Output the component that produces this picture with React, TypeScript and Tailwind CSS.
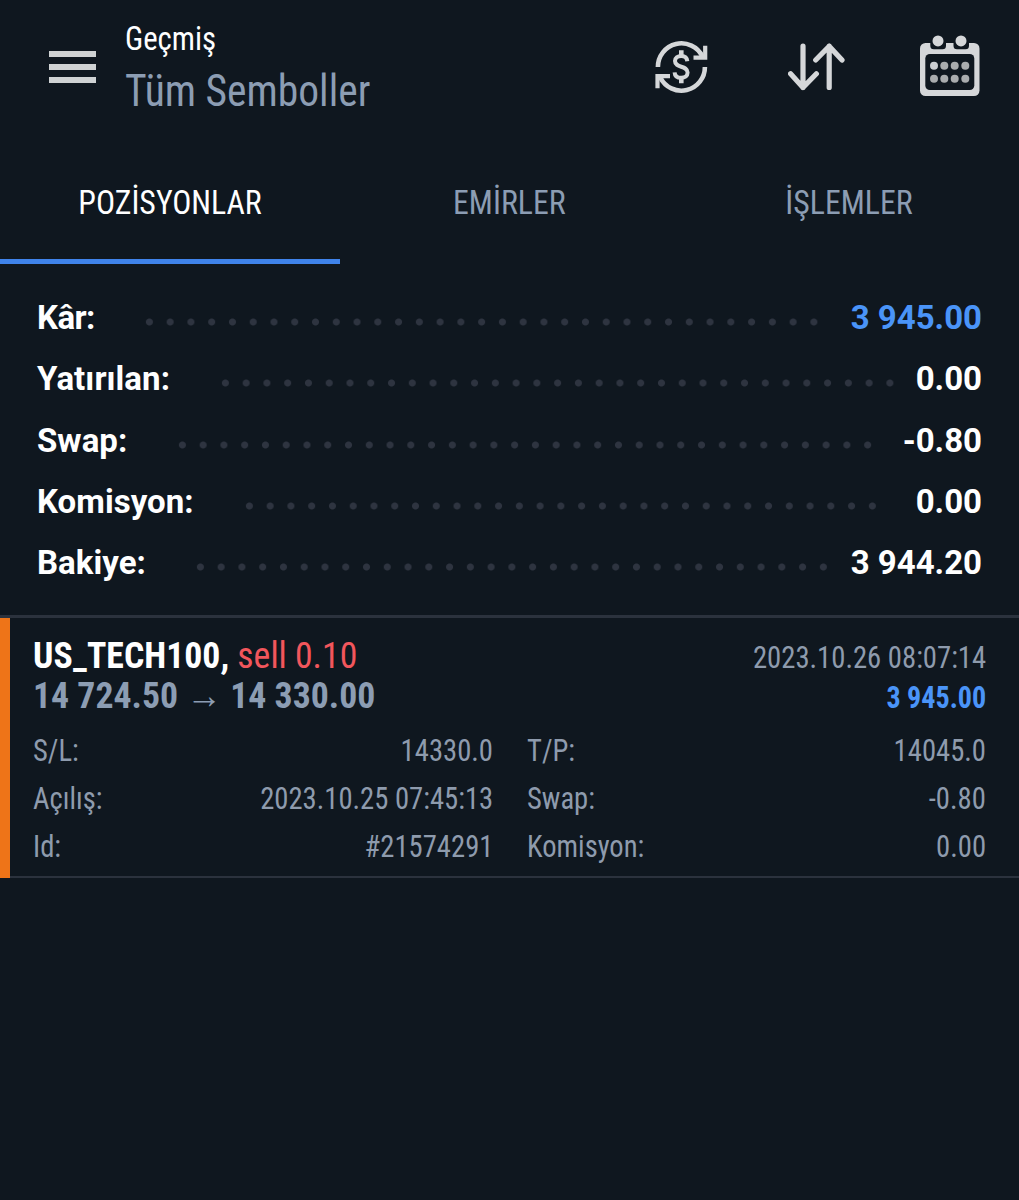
import clsx from "clsx";

type SummaryItem = { label: string; value: string; dots: string; blue?: boolean };

const tabs = ["POZİSYONLAR", "EMİRLER", "İŞLEMLER"];

const summary: SummaryItem[] = [
  { label: "Kâr:", value: "3 945.00", dots: "ml-[139px] w-[685px]", blue: true },
  { label: "Yatırılan:", value: "0.00", dots: "ml-[214.5px] w-[685px]" },
  { label: "Swap:", value: "-0.80", dots: "ml-[172px] w-[706px]" },
  { label: "Komisyon:", value: "0.00", dots: "ml-[239px] w-[644px]" },
  { label: "Bakiye:", value: "3 944.20", dots: "ml-[190px] w-[644px]" },
];

const details = [
  ["S/L:", "14330.0", "T/P:", "14045.0"],
  ["Açılış:", "2023.10.25 07:45:13", "Swap:", "-0.80"],
  ["Id:", "#21574291", "Komisyon:", "0.00"],
];

function CurrencyIcon() {
  return (
    <svg width="56" height="56" viewBox="0 0 56 56" fill="none" stroke="#d5d7d9" strokeWidth="4.6">
      <path d="M3.9 28A23.5 23.5 0 0 1 48.5 17.5" />
      <path d="M50.9 28A23.5 23.5 0 0 1 6.3 38.5" />
      <path d="M39.5 18.7H51.2V6.7" strokeWidth="4.2" />
      <path d="M16 37.2H3.5V49.2" strokeWidth="4.2" />
      <path d="M33.3 22.2C33 19 31 17 27.3 17S21 19 21 22C21 29.5 33.6 26 33.6 33.6C33.6 37 31 38.8 27.3 38.8S20.8 37 20.6 33.3" strokeWidth="4" />
      <path d="M27.3 11.3V17M27.3 38.5V44.3" />
    </svg>
  );
}

function SortIcon() {
  return (
    <svg width="58" height="50" viewBox="0 0 58 50" fill="none" stroke="#d5d7d9" strokeWidth="5.2" strokeLinecap="round" strokeLinejoin="round">
      <path d="M15 3.2V44.5M2.6 30.8L15 44.5L28.4 30.8" />
      <path d="M41.2 44.5V3.2M27.7 17L41.2 3.2L54 17" />
    </svg>
  );
}

function CalendarIcon() {
  return (
    <svg width="60" height="61" viewBox="0 0 60 61">
      <rect y="8" width="59.5" height="53" rx="5.5" fill="#d5d7d9" />
      <path d="M10.3 7H26V10.8A3.5 3.5 0 0 1 22.5 14.3H13.8A3.5 3.5 0 0 1 10.3 10.8ZM33.5 7H49V10.8A3.5 3.5 0 0 1 45.5 14.3H37A3.5 3.5 0 0 1 33.5 10.8Z" fill="#0f171f" />
      <circle cx="18" cy="5.9" r="5.5" fill="#d5d7d9" />
      <circle cx="41" cy="5.9" r="5.5" fill="#d5d7d9" />
      <rect x="5.3" y="19" width="49" height="36" rx="4.5" fill="#0f171f" />
      {[14, 24.3, 34.7, 45.3].map((cx) => (
        <g key={cx} fill="#a9acae">
          <circle cx={cx} cy="30.7" r="4" fill={cx < 20 ? "#cbced2" : undefined} />
          <circle cx={cx} cy="43.7" r="4" />
        </g>
      ))}
    </svg>
  );
}

function Header() {
  return (
    <header className="flex h-[146px] pl-[49px] pr-[39px]">
      <button className="mt-[51px] flex h-8 w-[47px] flex-col justify-between" aria-label="Menu">
        <span className="h-[6px] w-full bg-[#cfd2d3]" />
        <span className="h-[6px] w-full bg-[#cfd2d3]" />
        <span className="h-[6px] w-full bg-[#cfd2d3]" />
      </button>
      <div className="ml-[28.5px] flex-1 pt-[18px]">
        <h1 className="origin-left scale-x-[0.905] text-[34px] leading-[40px] text-white">Geçmiş</h1>
        <p className="mt-[6px] origin-left scale-x-[0.933] text-[44.5px] leading-[54px] text-[#8c9db3]">Tüm Semboller</p>
      </div>
      <div className="flex">
        <div className="mt-[39px]"><CurrencyIcon /></div>
        <div className="ml-[78px] mt-[43px]"><SortIcon /></div>
        <div className="ml-[74px] mt-[35px]"><CalendarIcon /></div>
      </div>
    </header>
  );
}

function SummaryRow({ item }: { item: SummaryItem }) {
  return (
    <div className="grid h-[61.3px] items-center text-[33px] font-bold leading-[40px] text-white [font-stretch:100%]">
      <div className={clsx("col-start-1 row-start-1 mt-[8px] h-[8px] bg-[radial-gradient(circle,#2e3440_3px,transparent_4px)] bg-[length:20.77px_8px] bg-repeat-x", item.dots)} />
      <div className="col-start-1 row-start-1 flex justify-between pl-[37px] pr-[37px]">
        <span className={item.blue ? "tracking-[-0.6px]" : "tracking-[0.05px]"}>{item.label}</span>
        <span className={clsx(item.blue && "text-[#4a94f8]")}>{item.value}</span>
      </div>
    </div>
  );
}

function DetailPair({ label, value }: { label: string; value: string }) {
  return (
    <div className="flex justify-between">
      <span className="origin-left scale-x-[0.922]">{label}</span>
      <span className="origin-right scale-x-[0.924]">{value}</span>
    </div>
  );
}

function PositionCard() {
  return (
    <section className="h-[263px] border-b-2 border-t-[3px] border-[#2b323d]">
      <div className="-mb-[2px] h-[260px] border-l-[10px] border-[#ee7418] pl-[23px] pr-[33px] pt-[16.5px]">
        <div className="flex h-[40.6px] items-baseline justify-between text-[37.5px] leading-[40.6px]">
          <div className="origin-left scale-x-[0.953] text-[#f2565c]">
            <b className="text-white">US_TECH100,</b> sell 0.10
          </div>
          <span className="origin-right scale-x-[0.925] text-[31px] text-[#8e9bad]">2023.10.26 08:07:14</span>
        </div>
        <div className="flex h-[40.6px] items-baseline justify-between text-[37.5px] font-bold leading-[40.6px] text-[#8c9db3]">
          <span className="origin-left scale-x-[0.953]">14 724.50 → 14 330.00</span>
          <span className="origin-right scale-x-[0.905] text-[31px] text-[#4a94f8]">3 945.00</span>
        </div>
        <div className="mt-[11px] text-[31px] leading-[48.1px] text-[#8e9bad]">
          {details.map(([label, value, label2, value2]) => (
            <div key={label} className="grid grid-cols-[460px_1fr] gap-x-[34px]">
              <DetailPair label={label} value={value} />
              <DetailPair label={label2} value={value2} />
            </div>
          ))}
        </div>
      </div>
    </section>
  );
}

export default function App() {
  return (
    <div className="h-[1200px] w-[1019px] overflow-hidden whitespace-nowrap bg-[#0f171f] font-['Roboto_Condensed','Roboto',sans-serif] [font-stretch:75%]">
      <Header />
      <nav className="grid h-[118px] grid-cols-3">
        {tabs.map((tab, i) => (
          <button
            key={tab}
            className={clsx(
              "border-b-[5px] text-[33px]",
              i === 0 ? "border-[#3f83ea] text-white" : "border-transparent text-[#8c9db3]"
            )}
          >
            <span className="inline-block scale-x-[0.965]">{tab}</span>
          </button>
        ))}
      </nav>
      <div className="h-[351px] pt-[23.5px] font-['Roboto',sans-serif]">
        {summary.map((item) => (
          <SummaryRow key={item.label} item={item} />
        ))}
      </div>
      <PositionCard />
    </div>
  );
}
